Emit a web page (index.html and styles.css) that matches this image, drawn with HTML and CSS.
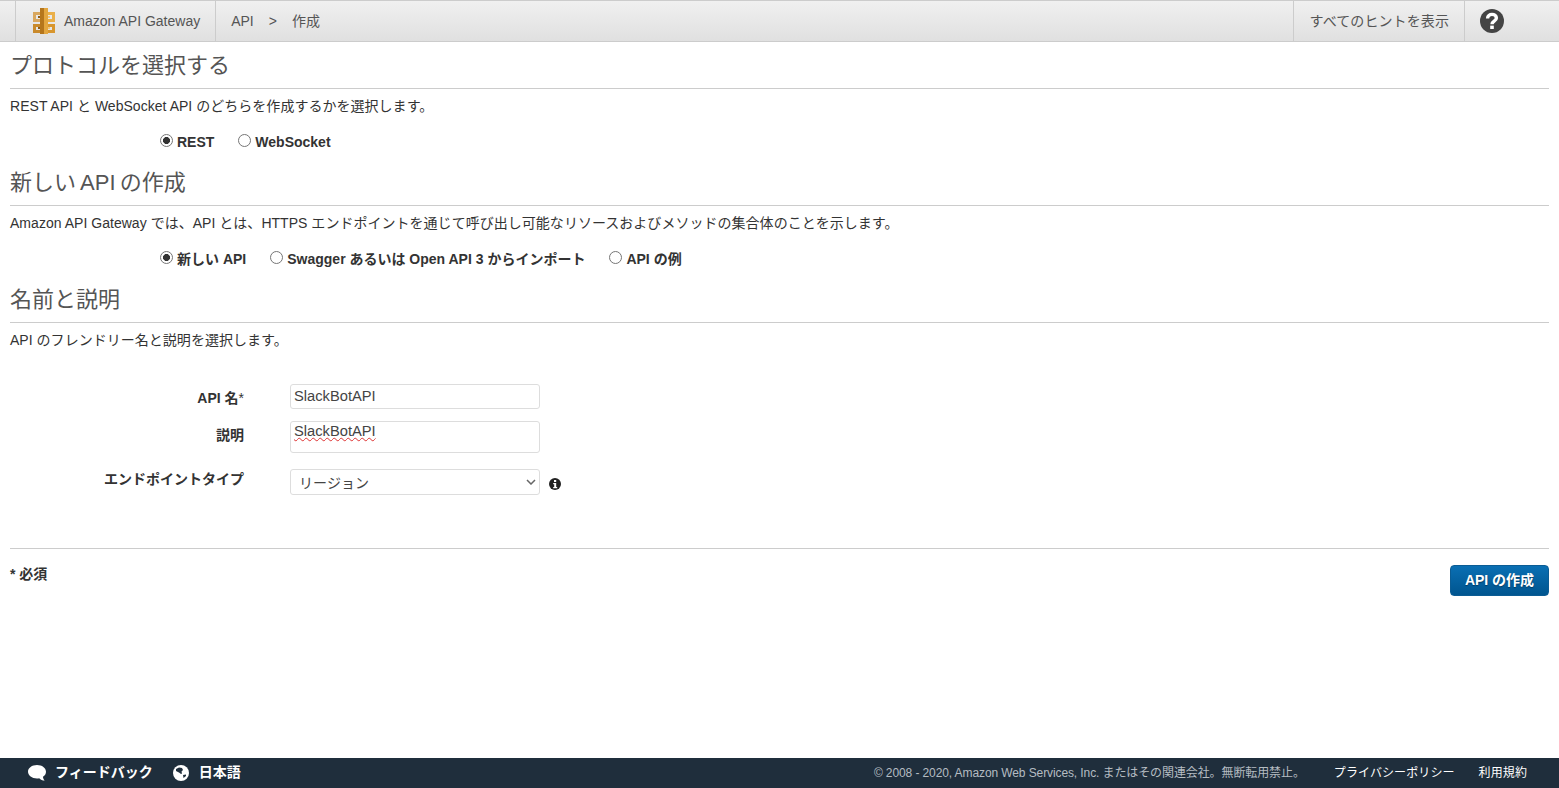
FILE: index.html
```html
<!DOCTYPE html>
<html lang="ja">
<head>
<meta charset="utf-8">
<title>Amazon API Gateway</title>
<link rel="stylesheet" href="styles.css">
</head>
<body>
<header class="topbar">
  <div class="brand">
    <svg class="logo" viewBox="0 0 24 26" width="24" height="26">
      <path fill="#d9a860" d="M1 4h7v3H4v4h4v3H1z"/>
      <path fill="#c98a2c" d="M1 16h7v3H4v3h4v3H1z"/>
      <path fill="#eab04a" d="M23 4h-7v3h4v4h-4v3h7z"/>
      <path fill="#d8962e" d="M23 16h-7v3h4v3h-4v3h7z"/>
      <path fill="#b5761c" d="M8 0h4v26H8z"/>
      <path fill="#e3a63f" d="M12 0h4v26h-4z"/>
      <path fill="#8f5c14" d="M6 8h2v2H6zM6 19h2v2H6z"/>
      <path fill="#f2c679" d="M16 8h2v2h-2zM16 19h2v2h-2z"/>
    </svg>
    <span>Amazon API Gateway</span>
  </div>
  <nav class="crumbs">
    <span>API</span><span class="sep">&gt;</span><span class="raised">作成</span>
  </nav>
  <div class="hints"><span class="raised">すべてのヒントを表示</span></div>
  <div class="help">
    <svg viewBox="0 0 24 24" width="24" height="24">
      <circle cx="12" cy="12" r="12" fill="#444"/>
      <path fill="none" stroke="#fff" stroke-width="3.4" d="M7.600 9.400c0-2.600 2-4 4.400-4s4.400 1.400 4.400 3.600c0 3.300-4.400 3-4.400 6.200"/>
      <rect x="10.200" y="16.600" width="3.600" height="3.400" fill="#fff"/>
    </svg>
  </div>
</header>

<main class="content">
  <section class="block">
    <h2 class="title">プロトコルを選択する</h2>
    <p class="desc">REST API と WebSocket API のどちらを作成するかを選択します。</p>
    <div class="choices">
      <label class="choice latin"><input type="radio" name="protocol" checked><span>REST</span></label>
      <label class="choice latin"><input type="radio" name="protocol"><span>WebSocket</span></label>
    </div>
  </section>

  <section class="block">
    <h2 class="title tight">新しい API の作成</h2>
    <p class="desc">Amazon API Gateway では、API とは、HTTPS エンドポイントを通じて呼び出し可能なリソースおよびメソッドの集合体のことを示します。</p>
    <div class="choices">
      <label class="choice"><input type="radio" name="kind" checked><span>新しい API</span></label>
      <label class="choice"><input type="radio" name="kind"><span>Swagger あるいは Open API 3 からインポート</span></label>
      <label class="choice"><input type="radio" name="kind"><span>API の例</span></label>
    </div>
  </section>

  <section class="block last">
    <h2 class="title">名前と説明</h2>
    <p class="desc">API のフレンドリー名と説明を選択します。</p>
    <div class="form">
      <label class="form-label">API 名<span class="star">*</span></label>
      <input class="field text" type="text" value="SlackBotAPI">
      <label class="form-label">説明</label>
      <div class="field text area"><span class="misspelt">SlackBotAPI</span></div>
      <label class="form-label type-label">エンドポイントタイプ</label>
      <div class="select-row">
        <div class="select-wrap">
          <select class="field select"><option>リージョン</option></select>
          <svg class="chevron" viewBox="0 0 10 6" width="10" height="6">
            <path fill="none" stroke="#666" stroke-width="1.500" d="M1 1l4 4 4-4"/>
          </svg>
        </div>
        <svg class="info" viewBox="0 0 12 12" width="12" height="12">
          <circle cx="6" cy="6" r="6" fill="#222"/>
          <rect x="5" y="2" width="2.200" height="2" fill="#fff"/>
          <path fill="#fff" d="M4.200 5h3v4h1v1.200H4.200V9h1V6.200h-1z"/>
        </svg>
      </div>
    </div>
  </section>

  <div class="actions">
    <span class="required">* 必須</span>
    <button class="primary" type="button"><span class="raised">API の作成</span></button>
  </div>
</main>

<footer class="footer">
  <span class="foot-link">
    <svg viewBox="0 0 18 16" width="18" height="16">
      <path fill="#fff" d="M9 0c5 0 9 2.900 9 6.800 0 2.200-1.200 3.900-3 5 0 1.400.6 2.700 1.700 3.700-2.200 0-4.100-.9-5.500-2.300-.7.1-1.400.2-2.200.2-5 0-9-3-9-6.700C0 2.900 4 0 9 0z"/>
    </svg>
    フィードバック
  </span>
  <span class="foot-link globe">
    <svg viewBox="0 0 16 16" width="16" height="16">
      <circle cx="8" cy="8" r="8" fill="#fff"/>
      <path fill="#1f2e3c" d="M3 4l3-1.500 3 .5 1 2-1.500 1.500.5 2-1 .5-2-1.500L3 6zM10 10l3-.5 0 1.500-2.500 2z"/>
    </svg>
    日本語
  </span>
  <span class="copyright">© 2008 - 2020, Amazon Web Services, Inc. またはその関連会社。無断転用禁止。</span>
  <span class="foot-legal">プライバシーポリシー</span>
  <span class="foot-legal">利用規約</span>
</footer>
</body>
</html>
```
FILE: styles.css
```css
* { box-sizing: border-box; }
html, body { height: 100%; }
body {
  margin: 0;
  display: flex;
  flex-direction: column;
  height: 100vh;
  overflow: hidden;
  background: #fff;
  color: #444;
  font-family: "Liberation Sans", "Noto Sans CJK JP", sans-serif;
  font-size: 14px;
}
.raised { display: inline-block; margin-bottom: 2px; }
.topbar {
  flex: none;
  height: 42px;
  display: flex;
  align-items: stretch;
  padding-left: 15px;
  background: linear-gradient(#f0f0f0, #e0e0e0);
  border-top: 1px solid #ccc;
  border-bottom: 1px solid #ccc;
  color: #555;
}
.brand {
  display: flex;
  align-items: center;
  gap: 8px;
  padding: 0 15px 0 16px;
  border-left: 1px solid #ccc;
  border-right: 1px solid #ccc;
}
.crumbs { display: flex; align-items: center; padding-left: 15px; flex: 1; }
.sep { margin: 0 15px; }
.hints {
  display: flex;
  align-items: center;
  padding: 0 15px 0 16px;
  border-left: 1px solid #ccc;
  border-right: 1px solid #ccc;
  letter-spacing: .1px;
}
.help { width: 94px; display: flex; align-items: center; padding-left: 15px; }
.content { flex: 1; padding: 0 10px; min-height: 0; }
.block { height: 117px; }
.block.last { height: auto; margin-bottom: 53px; }
.title {
  margin: 0;
  height: 47px;
  padding-top: 9px;
  font-size: 22px;
  line-height: 30px;
  font-weight: 400;
  color: #555;
  border-bottom: 1px solid #ccc;
}
.title.tight { word-spacing: -2px; }
.desc { margin: 0; height: 34px; line-height: 34px; color: #333; letter-spacing: .03px; }
.choices { display: flex; gap: 24px; padding-left: 150px; height: 36px; align-items: center; }
.choice {
  display: flex;
  align-items: center;
  font-weight: 700;
  color: #333;
}
.choice.latin span { padding-top: 2px; }
.choice input {
  appearance: none;
  flex: none;
  margin: 0 4px 2px 0;
  width: 13px;
  height: 13px;
  border: 1px solid #767676;
  border-radius: 50%;
  background: #fff;
}
.choice input:checked {
  background: radial-gradient(circle, #333 0 3.200px, #fff 3.800px);
}
.form {
  display: grid;
  grid-template-columns: 234px 250px;
  column-gap: 46px;
  grid-template-rows: 25px 36px 26px;
  row-gap: 12px;
  padding-top: 27px;
}
.form-label { font-weight: 700; color: #333; text-align: right; line-height: 28px; }
.type-label { line-height: 21px; }
.star { font-weight: 400; }
.field {
  width: 250px;
  height: 100%;
  margin: 0;
  padding: 0 3px;
  border: 1px solid #ddd;
  border-radius: 3px;
  background: #fff;
  font: inherit;
  color: #444;
  outline: none;
}
.text { font-size: 14.700px; padding-bottom: 1px; }
.area { height: 32px; line-height: 18px; }
.misspelt { text-decoration: underline wavy #d33; text-decoration-thickness: 1px; }
.select-row { display: flex; align-items: center; gap: 9px; width: 290px; }
.select-wrap { position: relative; flex: none; width: 250px; height: 100%; }
.select { appearance: none; padding: 2px 0 0 8px; display: block; letter-spacing: .1px; }
.chevron { position: absolute; right: 4px; top: 10px; pointer-events: none; }
.info { flex: none; margin-top: 4px; }
.actions {
  display: flex;
  justify-content: space-between;
  border-top: 1px solid #ccc;
  height: 60px;
}
.required { font-weight: 700; color: #333; padding-top: 14px; }
.primary {
  align-self: flex-start;
  margin-top: 16px;
  height: 31px;
  width: 99px;
  padding: 0;
  border: 1px solid #0b5c94;
  border-radius: 4px;
  background: linear-gradient(#0a6fb3, #00558f);
  color: #fff;
  font: inherit;
  font-weight: 700;
  text-shadow: 0 1px 1px #003a63;
}
.primary .raised { margin-bottom: 4px; }
.footer {
  flex: none;
  height: 30px;
  display: flex;
  align-items: center;
  padding: 0 32px 4px 28px;
  background: #1f2e3c;
  color: #fff;
  font-weight: 700;
}
.footer svg { margin-top: 4px; }
.foot-link { display: flex; align-items: center; gap: 9px; margin-right: 20px; }
.foot-link.globe { gap: 10px; }
.copyright { margin-left: auto; margin-right: 29px; font-size: 12px; font-weight: 400; color: #b5bcc2; letter-spacing: -.1px; }
.foot-legal { font-size: 12px; font-weight: 400; color: #fff; letter-spacing: .1px; }
.foot-legal + .foot-legal { margin-left: 24px; }
```
